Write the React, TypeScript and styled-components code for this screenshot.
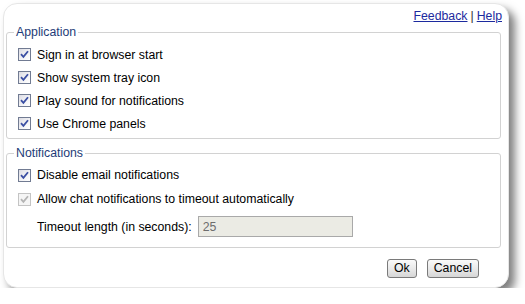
import React, { FC } from 'react'
import styled, { createGlobalStyle } from 'styled-components'

const GlobalStyle = createGlobalStyle`
  html, body {
    margin: 0;
    background: #fff;
  }
  body {
    font-family: 'Liberation Sans', Arial, sans-serif;
    font-size: 12.3px;
    color: #000;
  }
`

const Window = styled.div`
  box-sizing: border-box;
  margin: 3px 0 0 3px;
  width: 506px;
  height: 285px;
  padding: 5px 7px 0 2px;
  background: #fff;
  border: 1px solid #e6e6e6;
  border-radius: 14px;
  box-shadow: 6px 6px 8px rgba(0, 0, 0, 0.5);
`

const Header = styled.div`
  display: flex;
  justify-content: flex-end;
  align-items: center;
  height: 15px;
  line-height: 15px;
  margin-right: -1px;
`

const Link = styled.a`
  color: #1c2a9e;
  text-decoration: underline;
  cursor: pointer;
`

const Divider = styled.span`
  color: #333;
  margin: 0 3px;
`

const Group = styled.fieldset<{ $first?: boolean; $top: number; $bottom: number }>`
  margin: ${({ $first }) => ($first ? '1px' : '7px')} 0 0 0;
  padding: ${({ $top }) => $top}px 0 ${({ $bottom }) => $bottom}px 0;
  border: 1px solid #d2d2d2;
  border-radius: 3px;
  min-width: 0;
`

const Legend = styled.legend`
  margin-left: 7px;
  padding: 0 2px;
  line-height: 15px;
  color: #1e3c78;
`

const Row = styled.label<{ $height?: number }>`
  display: flex;
  align-items: center;
  gap: 6px;
  height: ${({ $height }) => $height ?? 23}px;
  padding-left: 11px;
`

const Box = styled.span<{ $disabled?: boolean }>`
  box-sizing: border-box;
  display: inline-flex;
  align-items: center;
  justify-content: center;
  width: 13px;
  height: 13px;
  flex: none;
  border: 1px solid ${({ $disabled }) => ($disabled ? '#c4c4c4' : '#717b92')};
  background: ${({ $disabled }) =>
    $disabled ? '#f5f5f5' : 'linear-gradient(135deg, #dcdce4 0%, #f4f4f6 60%, #fff 100%)'};
`

const TimeoutRow = styled.div`
  display: flex;
  align-items: center;
  height: 25px;
  margin-top: 3px;
  padding-left: 30px;
`

const NumberField = styled.input`
  box-sizing: border-box;
  width: 155px;
  height: 21px;
  margin-left: 6px;
  padding: 0 4px;
  border: 1px solid #a9a9a9;
  background: #ebebe4;
  color: #6d6d6d;
  font: inherit;
  outline: none;
`

const Actions = styled.div`
  display: flex;
  justify-content: flex-end;
  gap: 10px;
  margin-top: 11px;
  padding-right: 22px;
`

const Button = styled.button`
  box-sizing: border-box;
  height: 19px;
  padding: 0 6px;
  border: 1px solid #7a7a7a;
  border-radius: 3px;
  background: linear-gradient(#fafafa, #e6e6e6 60%, #d6d6d6);
  font: inherit;
  line-height: 15px;
  color: #000;
`

const Check: FC<{ disabled?: boolean }> = ({ disabled }) => (
  <Box $disabled={disabled}>
    <svg width='9' height='9' viewBox='0 0 9 9'>
      <path
        d='M1 4.2 L3.4 6.8 L8 1.2'
        fill='none'
        stroke={disabled ? '#b4b4b4' : '#3b4fa3'}
        strokeWidth='1.8'
      />
    </svg>
  </Box>
)

const appOptions = [
  'Sign in at browser start',
  'Show system tray icon',
  'Play sound for notifications',
  'Use Chrome panels'
]

const App: FC = () => (
  <>
    <GlobalStyle />
    <Window>
      <Header>
        <Link>Feedback</Link>
        <Divider>|</Divider>
        <Link>Help</Link>
      </Header>

      <Group $first $top={3} $bottom={3}>
        <Legend>Application</Legend>
        {appOptions.map((text) => (
          <Row key={text}>
            <Check />
            {text}
          </Row>
        ))}
      </Group>

      <Group $top={2} $bottom={8}>
        <Legend>Notifications</Legend>
        <Row $height={24}>
          <Check />
          Disable email notifications
        </Row>
        <Row $height={24}>
          <Check disabled />
          Allow chat notifications to timeout automatically
        </Row>
        <TimeoutRow>
          Timeout length (in seconds):
          <NumberField defaultValue='25' disabled />
        </TimeoutRow>
      </Group>

      <Actions>
        <Button>Ok</Button>
        <Button>Cancel</Button>
      </Actions>
    </Window>
  </>
)

export default App
